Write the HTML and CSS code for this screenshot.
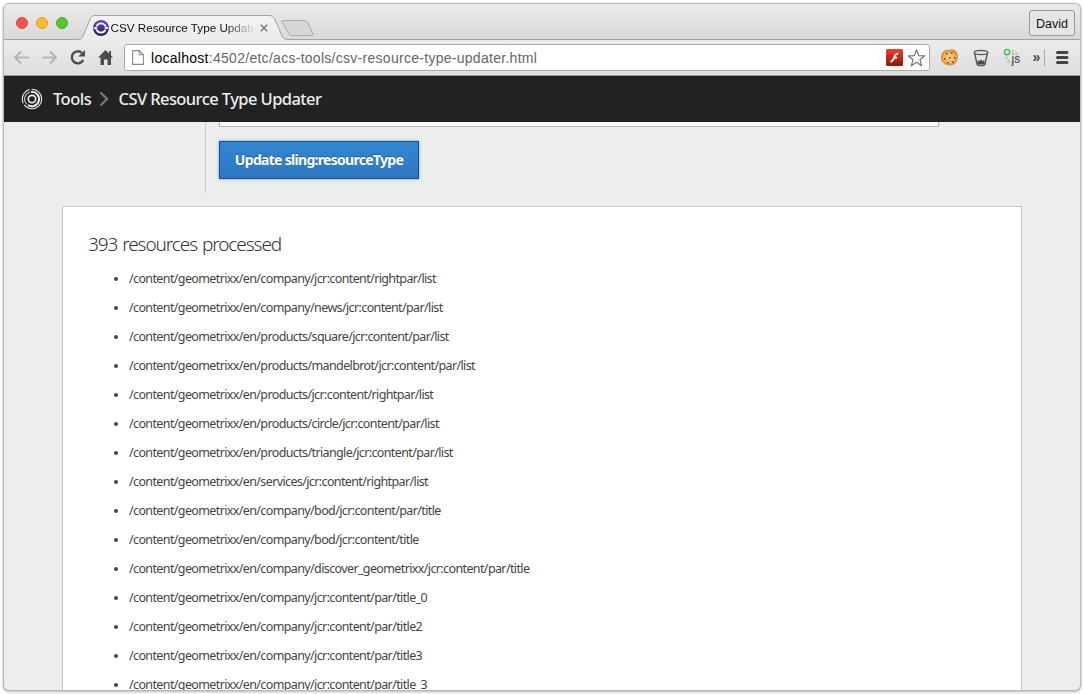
FILE: index.html
```html
<!DOCTYPE html>
<html lang="en">
<head>
<meta charset="utf-8">
<title>CSV Resource Type Updater</title>
<link rel="stylesheet" href="styles.css">
</head>
<body>
<div class="window">
  <div class="tabstrip">
    <div class="lights"><i class="light red"></i><i class="light yellow"></i><i class="light green"></i></div>
    <div class="tab">
      <svg class="tab-shape" width="244" height="36" viewBox="0 0 244 36">
        <defs><linearGradient id="tg" x1="0" y1="0" x2="0" y2="1"><stop offset="0" stop-color="#f3f3f3"/><stop offset="1" stop-color="#ebebeb"/></linearGradient></defs>
        <path d="M-4 36V35.500C1 35.500 2 34.500 3 32L10 15.500C11 12.500 12.500 11.500 15 11.500H189C192 11.500 193.500 12.500 195 15.500L202 32C203 34.500 205 35.500 209 35.500V36Z" fill="url(#tg)"/>
        <path d="M-4 35.500C1 35.500 2 34.500 3 32L10 15.500C11 12.500 12.500 11.500 15 11.500H189C192 11.500 193.500 12.500 195 15.500L202 32C203 34.500 205 35.500 209 35.500" fill="none" stroke="#a3a3a3"/>
        <path d="M203 16.500H223C226 16.500 227.500 17.500 228.500 20L232.500 29C233.400 31 233 31.500 230.500 31.500H213.500C210.500 31.500 209 30.500 208 28L202 18.500C201.500 17 202 16.500 203 16.500Z" fill="#d6d6d6" stroke="#aaa"/>
      </svg>
      <svg class="favicon" width="16" height="16" viewBox="0 0 16 16">
        <defs><linearGradient id="fg" x1="0" y1="0" x2="0" y2="1"><stop offset="0" stop-color="#6f42c4"/><stop offset="1" stop-color="#2c1c5c"/></linearGradient></defs>
        <circle cx="8" cy="8" r="8" fill="url(#fg)"/>
        <path d="M3.500 6.300A4.900 4.900 0 0 1 12.500 6.300M12.500 9.700A4.900 4.900 0 0 1 3.500 9.700" fill="none" stroke="#fff" stroke-width="1.800"/>
        <path d="M.6 7.300H4.600L3.500 9.600H2.300L.6 8.300ZM15.400 8.700H11.400L12.500 6.400H13.700L15.400 7.700Z" fill="#fff"/>
      </svg>
      <span class="tab-title">CSV Resource Type Updater</span>
      <svg class="tab-close" width="8" height="8" viewBox="0 0 8 8"><path d="M.8.8 7.200 7.200M7.200.8.8 7.200" stroke="#777" stroke-width="1.400"/></svg>
    </div>
    <div class="profile">David</div>
  </div>
  <div class="toolbar">
    <svg class="nav" width="120" height="35" viewBox="0 0 120 35">
      <g fill="none" stroke="#b5b5b5" stroke-width="2"><path d="M11 17.500H25M17 11.500 11 17.500 17 23.500"/><path d="M38 17.500H52M46 11.500 52 17.500 46 23.500"/></g>
      <path d="M79.200 20A6 6 0 1 1 78 13" fill="none" stroke="#4c4c4c" stroke-width="2.400"/><path d="M81 10V16.500H74.300Z" fill="#4c4c4c"/>
      <path d="M101.500 10 94 17.500H96.500V25H100V19.500H103.500V25H107V17.500H109L107 15.400V11H105V13.400Z" fill="#4c4c4c"/>
    </svg>
    <div class="omnibox">
      <svg class="page-icon" width="12" height="15" viewBox="0 0 12 15"><path d="M.6.6H7.200L11.400 4.800V14.400H.6ZM7.200.6V4.800H11.400" fill="#fff" stroke="#8a8a8a" stroke-width="1.100"/></svg>
      <span class="url"><b>localhost</b>:4502/etc/acs-tools/csv-resource-type-updater.html</span>
      <svg class="flash" width="17" height="17" viewBox="0 0 17 17">
        <defs><linearGradient id="rg" x1="0" y1="0" x2="0" y2="1"><stop offset="0" stop-color="#ef4030"/><stop offset="1" stop-color="#8c170f"/></linearGradient></defs>
        <rect width="17" height="17" rx="1.500" fill="url(#rg)"/><path d="M12.300 4.500C9.200 4.500 8.800 7 8 9C7.200 11.200 6.500 12.500 4.500 12.700M7.800 8.700H11" fill="none" stroke="#fff" stroke-width="1.700"/></svg>
      <svg class="star" width="19" height="18" viewBox="0 0 19 18"><path d="M9.500 .8 11.700 6.600 17.800 6.800 13 10.700 14.700 16.800 9.500 13.300 4.300 16.800 6 10.700 1.200 6.800 7.300 6.600Z" fill="#fff" stroke="#757575" stroke-width="1.200" stroke-linejoin="round"/></svg>
    </div>
    <svg class="extensions" width="141" height="35" viewBox="0 0 141 35">
      <defs><radialGradient id="cg"><stop offset="0" stop-color="#fbd08a"/><stop offset=".7" stop-color="#efb05c"/><stop offset="1" stop-color="#d18835"/></radialGradient></defs>
      <path d="M10 10C14 8.500 18 11 18.500 14C20 19 17 24 13.500 25C8 27 2 23 2 18C2 13 5.500 9 10 10Z" fill="url(#cg)"/>
      <path d="M7 13H8.500V14.500H7ZM12 12H13.500V13.500H12ZM5 18H6.500V19.500H5ZM10 17H11.500V18.500H10ZM15 17H16.500V18.500H15ZM8 22H9.500V23.500H8ZM13 21.500H14.500V23H13Z" fill="#75420f"/>
      <path d="M35.500 12.500 38 24C38.500 26 45.500 26 46 24L48.500 12.500" fill="#e5e5e5" stroke="#5a5a5a" stroke-width="1.500"/><ellipse cx="42" cy="12.500" rx="6.800" ry="2" fill="#eee" stroke="#5a5a5a" stroke-width="1.300"/><path d="M38.500 24 39 20.500 40.500 21.500 42 19.500 43.500 21.500 45 20.500 45.500 24Z" fill="#4b4b4b" stroke="#4b4b4b" stroke-width=".6"/>
      <circle cx="73" cy="17" r="5.500" fill="#eee" stroke="#c4c4c4" stroke-width="3" stroke-dasharray="2.400 1.200"/><circle cx="73" cy="17" r="4.500" fill="#e8e8e8" stroke="#cfcfcf"/>
      <circle cx="68" cy="12" r="2.700" fill="#c9eec9" stroke="#49bd52" stroke-width="1.300"/><text x="72.500" y="23" class="js">js</text>
      <text x="93.500" y="22" class="more">»</text><path d="M105.500 9V26" stroke="#aaa"/>
      <path d="M118.500 12.500H128M118.500 17.500H128M118.500 22.500H128" stroke="#444" stroke-width="3" stroke-linecap="round"/>
    </svg>
  </div>
  <div class="header">
    <svg class="brand" width="22" height="22" viewBox="0 0 22 22" fill="none" stroke="#eee"><circle cx="11" cy="11" r="3.700" stroke-width="1.700"/><circle cx="11" cy="11" r="9.700" stroke-width="1.100" stroke-dasharray="24 2 17 2"/><path d="M6 16.500A7.300 7.300 0 0 1 9 4" stroke-width="1"/><path d="M10 3.900A7.200 7.200 0 1 1 7 17.100" stroke-width="2"/></svg>
    <span class="crumb tools">Tools</span>
    <svg class="chevron" width="10" height="16" viewBox="0 0 10 16"><path d="M1.500 1.500 8 8 1.500 14.500" fill="none" stroke="#777" stroke-width="2.400"/></svg>
    <span class="crumb current">CSV Resource Type Updater</span>
  </div>
  <div class="page">
    <div class="form"><div class="field"></div><button class="submit"><span>Update sling:resourceType</span></button></div>
    <div class="panel">
      <h1><span>393 resources processed</span></h1>
      <ul>
        <li><span>/content/geometrixx/en/company/jcr:content/rightpar/list</span></li>
        <li><span>/content/geometrixx/en/company/news/jcr:content/par/list</span></li>
        <li><span>/content/geometrixx/en/products/square/jcr:content/par/list</span></li>
        <li><span>/content/geometrixx/en/products/mandelbrot/jcr:content/par/list</span></li>
        <li><span>/content/geometrixx/en/products/jcr:content/rightpar/list</span></li>
        <li><span>/content/geometrixx/en/products/circle/jcr:content/par/list</span></li>
        <li><span>/content/geometrixx/en/products/triangle/jcr:content/par/list</span></li>
        <li><span>/content/geometrixx/en/services/jcr:content/rightpar/list</span></li>
        <li><span>/content/geometrixx/en/company/bod/jcr:content/par/title</span></li>
        <li><span>/content/geometrixx/en/company/bod/jcr:content/title</span></li>
        <li><span>/content/geometrixx/en/company/discover_geometrixx/jcr:content/par/title</span></li>
        <li><span>/content/geometrixx/en/company/jcr:content/par/title_0</span></li>
        <li><span>/content/geometrixx/en/company/jcr:content/par/title2</span></li>
        <li><span>/content/geometrixx/en/company/jcr:content/par/title3</span></li>
        <li><span>/content/geometrixx/en/company/jcr:content/par/title_3</span></li>
      </ul>
    </div>
  </div>
</div>
</body>
</html>
```
FILE: styles.css
```css
* { box-sizing: border-box; }
html { background: #fff; overflow: hidden; }
body { margin: 0; padding: 4px; height: 694px; font-family: "Noto Sans", sans-serif; overflow: hidden; }
.window { width: 1076px; height: 686px; display: flex; flex-direction: column; overflow: hidden; border-radius: 5px; background: #ededed; box-shadow: 0 0 0 1px #b8b8b8, 0 1px 3px 1px rgba(0,0,0,.3); }
.tabstrip { flex: none; height: 36px; display: flex; align-items: flex-start; background: linear-gradient(#ebebeb, #d8d8d8); border-bottom: 1px solid #a3a3a3; font-family: "Liberation Sans", sans-serif; }
.lights { width: 76px; height: 35px; padding: 13px 0 0 12px; display: flex; gap: 8px; }
.light { width: 12px; height: 12px; border-radius: 50%; }
.red { background: #f4544d; border: 1px solid #de4640; }
.yellow { background: #fbb92e; border: 1px solid #dfa023; }
.green { background: #5ac534; border: 1px solid #47ad28; }
.tab { position: relative; height: 36px; width: 244px; padding: 16px 0 0 13px; display: flex; align-items: flex-start; }
.tab-shape { position: absolute; left: 0; top: 0; overflow: visible; }
.favicon, .tab-title, .tab-close { position: relative; flex: none; }
.tab-title { width: 143px; margin-left: 1.500px; font-size: 11.700px; line-height: 16px; white-space: nowrap; overflow: hidden; color: #111; -webkit-mask-image: linear-gradient(90deg, #000 113px, transparent 145px); mask-image: linear-gradient(90deg, #000 113px, transparent 145px); }
.tab-close { margin: 4px 0 0 6px; }
.profile { margin: 6px 5px 0 auto; width: 46px; height: 26px; border: 1px solid #999; border-radius: 3px; background: #e5e5e5; text-align: center; font-size: 12.500px; line-height: 26px; color: #111; }
.toolbar { flex: none; height: 36px; display: flex; align-items: flex-start; background: linear-gradient(#ebebeb, #dedede); border-bottom: 1px solid #999; }
.nav { flex: none; }
.omnibox { flex: none; width: 806px; height: 27px; margin-top: 4px; padding: 0 3px 0 7px; display: flex; align-items: center; background: #fff; border: 1px solid #aaa; border-radius: 3px; }
.url { margin-left: 7px; margin-top: 1px; flex: 1; font: 14px "Liberation Sans", sans-serif; letter-spacing: .28px; white-space: nowrap; color: #666; }
.url b { font-weight: 400; color: #000; }
.star { margin-left: 4px; }
.extensions { flex: none; margin-left: 9px; }
.js { font: 12px "Liberation Sans", sans-serif; fill: #444; }
.more { font: bold 14px "Liberation Sans", sans-serif; fill: #444; }
.header { flex: none; height: 46px; padding-left: 17px; display: flex; align-items: center; background: #222; color: #eee; font-size: 16.500px; font-weight: 500; white-space: nowrap; }
.crumb { padding-bottom: 2px; }
.tools { margin-left: 10px; width: 46px; letter-spacing: -.5px; }
.current { margin-left: 9.500px; letter-spacing: -.58px; }
.page { flex: 1; min-height: 0; overflow: hidden; }
.form { width: 871px; height: 71px; margin-left: 201px; border-left: 1px solid #ccc; padding-left: 13px; }
.field { width: 720px; height: 5px; background: #fafafa; border: 1px solid #b8b8b8; border-top: 0; }
.submit { display: block; width: 200px; height: 38px; margin-top: 14px; padding: 0 0 2px; border: 1px solid #1f4d80; background: linear-gradient(#3287d2, #2f76c1); box-shadow: 0 0 3px #63a3df; color: #fff; font: bold 14px "Noto Sans", sans-serif; letter-spacing: -.7px; white-space: nowrap; text-shadow: 0 -1px 0 rgba(0,0,0,.3); }
.panel { width: 960px; height: 520px; margin: 13px 0 0 58px; padding: 23px 26px; border: 1px solid #c8c8c8; background: #fff; color: #444; }
h1 { margin: 0 0 0 -1px; height: 35px; line-height: 29px; font-size: 19px; font-weight: 300; letter-spacing: -1.080px; word-spacing: 1px; color: #333; }
ul { margin: 0; padding-left: 40px; }
li { height: 29px; line-height: 27px; font-size: 12.500px; letter-spacing: -.62px; white-space: nowrap; }
```
